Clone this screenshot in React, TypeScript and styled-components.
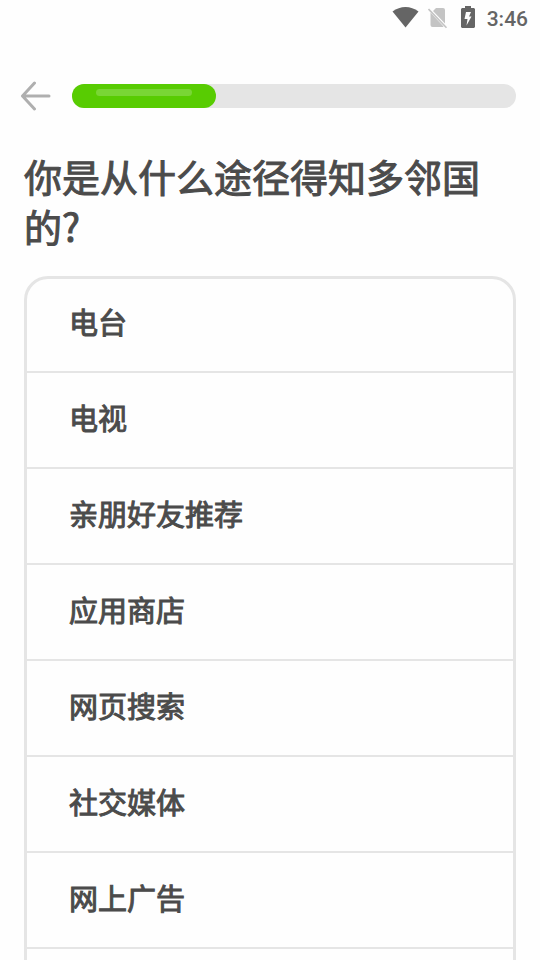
import React from "react";
import styled, { createGlobalStyle } from "styled-components";

const GlobalStyle = createGlobalStyle`
  *, *::before, *::after { box-sizing: border-box; }
  html, body, #root { height: 100%; margin: 0; }
  body {
    background: #fefefe;
    color: #4b4b4b;
    font-family: "Noto Sans CJK SC", sans-serif;
  }
`;

const Screen = styled.div`
  height: 100%;
  overflow: hidden;
`;

const StatusBar = styled.header`
  display: flex;
  justify-content: flex-end;
  align-items: center;
  height: 36px;
  padding: 0 12px;
  color: #656565;
`;

const StatusIcon = styled.svg<{ $gap: number }>`
  flex: none;
  margin-right: ${(p) => p.$gap}px;
`;

const Clock = styled.time`
  font-family: Roboto, sans-serif;
  font-size: 21px;
  font-weight: 500;
  line-height: 36px;
  padding-top: 2px;
`;

const TopBar = styled.nav`
  display: flex;
  align-items: center;
  gap: 20px;
  height: 48px;
  margin-top: 36px;
  padding: 0 24px 0 20px;
`;

const BackButton = styled.button`
  display: flex;
  padding: 0;
  border: 0;
  background: none;
  color: #afafaf;
  cursor: pointer;
`;

const Track = styled.div`
  flex: 1;
  height: 24px;
  border-radius: 12px;
  background: #e5e5e5;
`;

const Fill = styled.div`
  height: 100%;
  padding: 5px 24px;
  border-radius: 12px;
  background: #58cc02;
`;

const Shine = styled.div`
  height: 7px;
  border-radius: 4px;
  background: #79d635;
`;

const Content = styled.main`
  padding: 31px 24px 0;
`;

const Title = styled.h1`
  margin: 0;
  font-size: 38px;
  font-weight: 400;
  line-height: 50px;
  -webkit-text-stroke: 1px currentColor;
`;

const Options = styled.ul`
  margin: 25px 0 0;
  padding: 0;
  list-style: none;
  border: 3px solid #e5e5e5;
  border-radius: 24px;
  overflow: hidden;
`;

const OptionItem = styled.li`
  border-bottom: 2px solid #e5e5e5;

  &:first-child { margin-top: -2px; }
`;

const OptionButton = styled.button`
  display: block;
  width: 100%;
  height: 94px;
  padding: 0 42px 6px;
  border: 0;
  background: none;
  color: inherit;
  font: inherit;
  font-size: 29px;
  font-weight: 400;
  text-align: left;
  -webkit-text-stroke: 1px currentColor;
  cursor: pointer;
`;

const options = ["电台", "电视", "亲朋好友推荐", "应用商店", "网页搜索", "社交媒体", "网上广告"];
const progress = 32.4;

export default function App() {
  return (
    <Screen>
      <GlobalStyle />
      <StatusBar>
        <StatusIcon $gap={8} width="28" height="22" viewBox="0 0 28 22" aria-hidden="true">
          <path fill="currentColor" d="M13.5 20.5 0.5 4.500Q6.500 0 13.500 0T26.500 4.500Z" />
        </StatusIcon>
        <StatusIcon $gap={13} width="20" height="22" viewBox="0 0 20 22" aria-hidden="true">
          <path fill="#c4c4c4" d="M8 1H15Q17 1 17 3V16.500L5 4ZM2.500 5.500 15.500 19.500Q15 20 14.500 20H4.500Q2.500 20 2.500 18Z" />
          <path fill="none" stroke="#c4c4c4" strokeWidth="1.600" d="M0.500 2 18.500 20.700" />
        </StatusIcon>
        <StatusIcon $gap={12} width="14" height="24" viewBox="0 0 14 24" aria-hidden="true">
          <path fill="currentColor" fillRule="evenodd" d="M4 0h6v2h3l1 1v18l-1 1H1l-1-1V3l1-1h3zM5 6 3.500 13H6.500L5.500 19.500 10.500 10.500H8L10 6Z" />
        </StatusIcon>
        <Clock>3:46</Clock>
      </StatusBar>
      <TopBar>
        <BackButton type="button" aria-label="返回">
          <svg width="32" height="30" viewBox="0 0 32 30" fill="none" stroke="currentColor" strokeWidth="3" strokeLinecap="round" strokeLinejoin="round">
            <path d="M14.500 2 2.500 15l12 13M2.500 15H29" />
          </svg>
        </BackButton>
        <Track role="progressbar" aria-label="进度" aria-valuenow={progress} aria-valuemin={0} aria-valuemax={100}>
          <Fill style={{ width: `${progress}%` }}>
            <Shine />
          </Fill>
        </Track>
      </TopBar>
      <Content>
        <Title>你是从什么途径得知多邻国的?</Title>
        <Options>
          {options.map((label) => (
            <OptionItem key={label}>
              <OptionButton type="button">{label}</OptionButton>
            </OptionItem>
          ))}
          <OptionItem>
            <OptionButton type="button" aria-label="其他" />
          </OptionItem>
        </Options>
      </Content>
    </Screen>
  );
}
